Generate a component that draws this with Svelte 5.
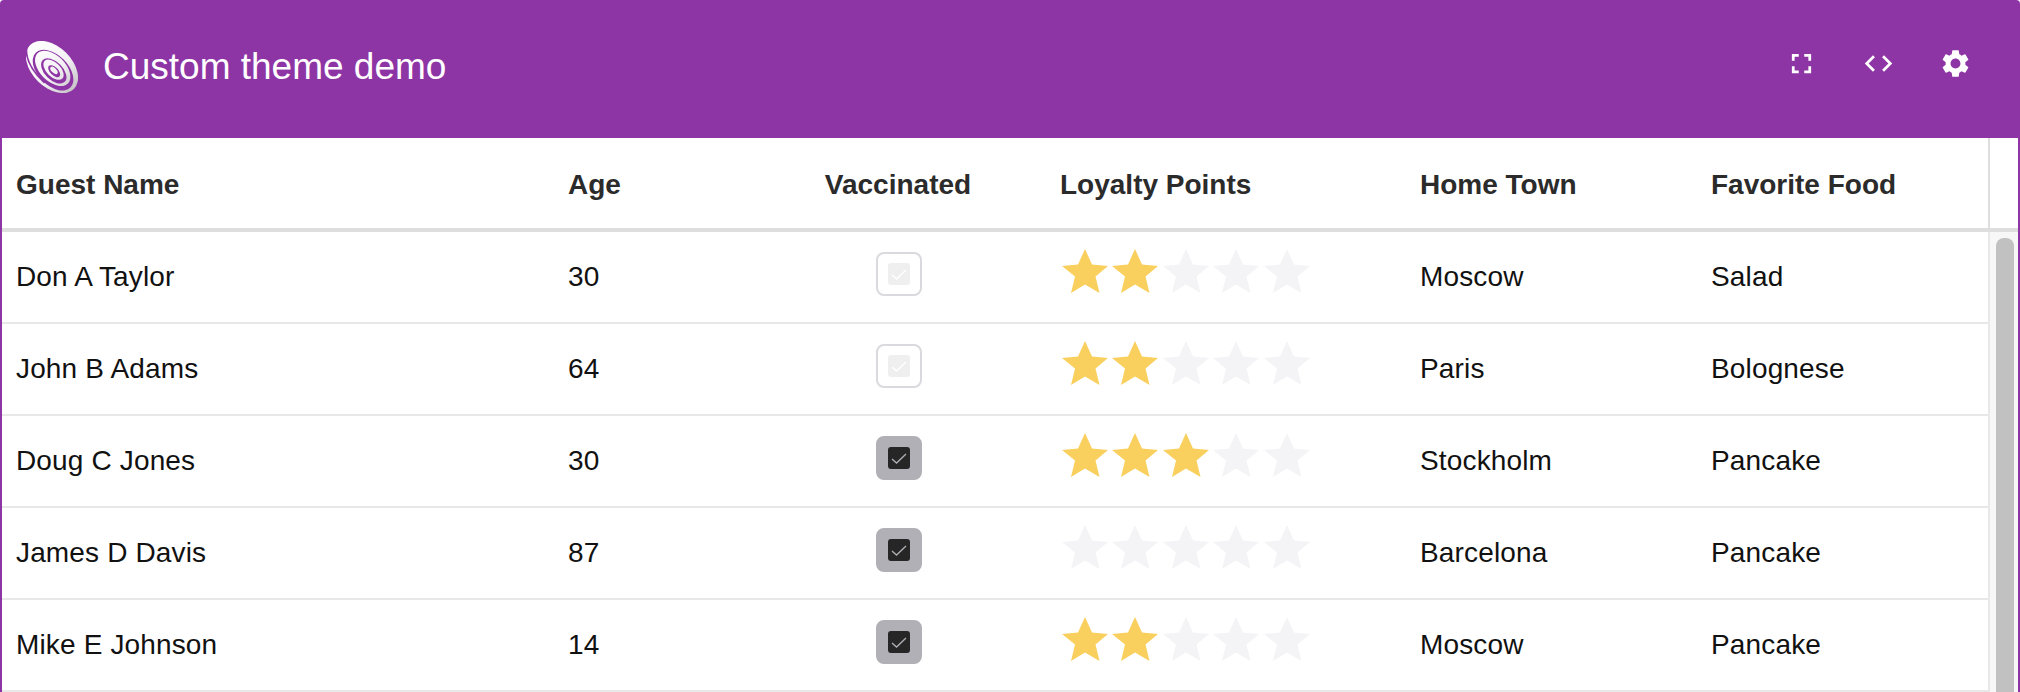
<script lang="ts">
	const COLUMNS = ['Guest Name', 'Age', 'Vaccinated', 'Loyalty Points', 'Home Town', 'Favorite Food'];

	const guests = [
		{ name: 'Don A Taylor', age: 30, vaccinated: false, points: 2, town: 'Moscow', food: 'Salad' },
		{ name: 'John B Adams', age: 64, vaccinated: false, points: 2, town: 'Paris', food: 'Bolognese' },
		{ name: 'Doug C Jones', age: 30, vaccinated: true, points: 3, town: 'Stockholm', food: 'Pancake' },
		{ name: 'James D Davis', age: 87, vaccinated: true, points: 0, town: 'Barcelona', food: 'Pancake' },
		{ name: 'Mike E Johnson', age: 14, vaccinated: true, points: 2, town: 'Moscow', food: 'Pancake' }
	];

	// nested ellipses of the swirl logo, outermost first
	const SWIRL = [
		{ cx: 26, cy: 26, rx: 31, ry: 20, on: true },
		{ cx: 29, cy: 27.5, rx: 24.5, ry: 15, on: false },
		{ cx: 27.5, cy: 26.5, rx: 21.5, ry: 12.8, on: true },
		{ cx: 30, cy: 27.5, rx: 15.5, ry: 9, on: false },
		{ cx: 29, cy: 26.8, rx: 12.5, ry: 7, on: true },
		{ cx: 30.5, cy: 27.4, rx: 7.5, ry: 4, on: false },
		{ cx: 29.8, cy: 27, rx: 4.6, ry: 2.4, on: true }
	];
</script>

<div class="app">
	<header class="topbar">
		<div class="brand">
			<svg class="logo" viewBox="0 0 52 52" xmlns="http://www.w3.org/2000/svg">
				<defs>
					<linearGradient id="swirl" gradientUnits="userSpaceOnUse" x1="-5" y1="0" x2="57" y2="0">
						<stop offset="0" stop-color="#ffffff" />
						<stop offset="0.6" stop-color="#f4f1f5" />
						<stop offset="1" stop-color="#c6c4c7" />
					</linearGradient>
				</defs>
				<g transform="rotate(45 26 26)">
					{#each SWIRL as e}
						<ellipse cx={e.cx} cy={e.cy} rx={e.rx} ry={e.ry} fill={e.on ? 'url(#swirl)' : '#8e35a5'} />
					{/each}
					<path d="M-6 30 C2 40 16 43 32 42.500" fill="none" stroke="#8e35a5" stroke-width="1.800" />
				</g>
			</svg>
			<span class="title">Custom theme demo</span>
		</div>
		<div class="actions">
			<button class="icon" aria-label="Fullscreen">
				<svg viewBox="0 0 24 24"><path d="M7 14H5v5h5v-2H7v-3zm-2-4h2V7h3V5H5v5zm12 7h-3v2h5v-5h-2v3zM14 5v2h3v3h2V5h-5z" /></svg>
			</button>
			<button class="icon" aria-label="Code">
				<svg viewBox="0 0 24 24"><path d="M9.4 16.6L4.8 12l4.6-4.6L8 6l-6 6 6 6 1.4-1.4zm5.2 0l4.6-4.6-4.6-4.6L16 6l6 6-6 6-1.4-1.4z" /></svg>
			</button>
			<button class="icon" aria-label="Settings">
				<svg viewBox="0 0 24 24"><path d="M19.14 12.94c.04-.3.06-.61.06-.94 0-.32-.02-.64-.07-.94l2.03-1.58a.49.49 0 0 0 .12-.61l-1.92-3.32a.488.488 0 0 0-.59-.22l-2.39.96c-.5-.38-1.03-.7-1.62-.94l-.36-2.54a.484.484 0 0 0-.48-.41h-3.84c-.24 0-.43.17-.47.41l-.36 2.54c-.59.24-1.13.57-1.62.94l-2.39-.96c-.22-.08-.47 0-.59.22L2.74 8.87c-.12.21-.08.47.12.61l2.03 1.58c-.05.3-.09.63-.09.94s.02.64.07.94l-2.03 1.58a.49.49 0 0 0-.12.61l1.92 3.32c.12.22.37.29.59.22l2.39-.96c.5.38 1.03.7 1.62.94l.36 2.54c.05.24.24.41.48.41h3.84c.24 0 .44-.17.47-.41l.36-2.54c.59-.24 1.13-.56 1.62-.94l2.39.96c.22.08.47 0 .59-.22l1.92-3.32c.12-.22.07-.47-.12-.61l-2.01-1.58zM12 15.6c-1.98 0-3.6-1.62-3.6-3.6s1.62-3.6 3.6-3.6 3.6 1.62 3.6 3.6-1.62 3.6-3.6 3.6z" /></svg>
			</button>
		</div>
	</header>

	<div class="grid">
		<div class="head">
			<div class="row head-row">
				{#each COLUMNS as col, i}
					<div class="cell" class:center={i === 2}>{col}</div>
				{/each}
			</div>
			<div class="head-spacer"></div>
		</div>

		<div class="body">
			<div class="rows">
				{#each guests as guest}
					<div class="row guest">
						<div class="cell">{guest.name}</div>
						<div class="cell">{guest.age}</div>
						<div class="cell center">
							<span class="check" class:on={guest.vaccinated}>
								<span class="box">
									<svg viewBox="0 0 22 22"><path d="M4 12l4.500 4L18 7" /></svg>
								</span>
							</span>
						</div>
						<div class="cell">
							<span class="stars">
								{#each [1, 2, 3, 4, 5] as n}
									<svg class="star" class:lit={n <= guest.points} viewBox="0 0 46 44">
										<path d="M23 0l7 15.500 16 1.500-12.500 10.500 4 16.500L23 35.500 9 44l4-16.500L0 17l16-1.500z" />
									</svg>
								{/each}
							</span>
						</div>
						<div class="cell">{guest.town}</div>
						<div class="cell">{guest.food}</div>
					</div>
				{/each}
			</div>
			<div class="track"><div class="thumb"></div></div>
		</div>
	</div>
</div>

<style>
	:global(body) {
		margin: 0;
		background: #fff;
	}

	.app {
		height: 692px;
		display: flex;
		flex-direction: column;
		box-sizing: border-box;
		overflow: hidden;
		font-family: 'Liberation Sans', Arial, sans-serif;
		background: #8e35a5;
		border-radius: 4px 4px 0 0;
	}

	.topbar {
		height: 138px;
		flex: none;
		display: flex;
		justify-content: space-between;
		align-items: center;
		padding: 0 26px 12px 26px;
		box-sizing: border-box;
		color: #fff;
	}

	.brand {
		display: flex;
		align-items: center;
		gap: 25px;
		padding-top: 8px;
	}

	.logo {
		width: 52px;
		height: 52px;
		display: block;
		filter: blur(0.4px);
	}

	.title {
		font-size: 37px;
		line-height: 40px;
		padding-top: 0;
		margin-bottom: 1px;
	}

	.actions {
		display: flex;
	}

	.icon {
		width: 77px;
		height: 40px;
		padding: 0;
		border: none;
		background: none;
		display: flex;
		align-items: center;
		justify-content: center;
		cursor: pointer;
	}

	.icon svg {
		width: 33px;
		height: 33px;
		fill: #fff;
	}

	.grid {
		flex: 1;
		margin: 0 2px;
		background: #fff;
		display: flex;
		flex-direction: column;
		min-height: 0;
	}

	.head {
		height: 94px;
		flex: none;
		display: flex;
		box-sizing: border-box;
		border-bottom: 4px solid #dedede;
		font-weight: 700;
		color: #2b2b2b;
	}

	.head-row .cell {
		padding-top: 3px;
	}

	.head-spacer {
		width: 30px;
		border-left: 2px solid #dedede;
		box-sizing: border-box;
		flex: none;
		margin-left: auto;
	}

	.row {
		display: grid;
		grid-template-columns: 552px 196px 296px 360px 291px 291px;
		width: 1986px;
		flex: none;
	}

	.cell {
		display: flex;
		align-items: center;
		padding-left: 14px;
		font-size: 28px;
		min-width: 0;
		white-space: nowrap;
	}

	.guest .cell {
		padding-bottom: 1px;
		letter-spacing: 0.15px;
	}

	.cell.center {
		justify-content: center;
		padding-left: 0;
	}

	.body {
		flex: 1;
		display: flex;
		min-height: 0;
	}

	.rows {
		width: 1986px;
		flex: none;
	}

	.guest {
		height: 92px;
		box-sizing: border-box;
		border-bottom: 2px solid #e8e8e8;
		color: #111;
	}

	.check {
		width: 46px;
		height: 44px;
		box-sizing: border-box;
		margin: 0 0 5px 2px;
		border: 2px solid #d9d9de;
		border-radius: 8px;
		display: flex;
		align-items: center;
		justify-content: center;
	}

	.check.on {
		background: #b1b0b6;
		border-color: #b1b0b6;
	}

	.box {
		width: 22px;
		height: 22px;
		background: #efefef;
		border-radius: 3px;
		display: block;
	}

	.box svg {
		display: block;
		width: 22px;
		height: 22px;
		fill: none;
		stroke: #fff;
		stroke-width: 1.3;
	}

	.check.on .box {
		background: #262626;
	}

	.check.on .box svg {
		stroke: #b1b0b6;
	}

	.stars {
		display: flex;
		gap: 4.4px;
		margin: 0 0 12px 2px;
	}

	.star {
		width: 46px;
		height: 44px;
		display: block;
		fill: #f4f4f6;
	}

	.star.lit {
		fill: #f9d05d;
	}

	.track {
		flex: 1;
		border-left: 2px solid #e8e8e8;
		background: #f7f7f7;
		padding: 6px 4px 0 6px;
	}

	.thumb {
		height: 100%;
		background: #c1c1c1;
		border-radius: 8px 8px 0 0;
	}
</style>
